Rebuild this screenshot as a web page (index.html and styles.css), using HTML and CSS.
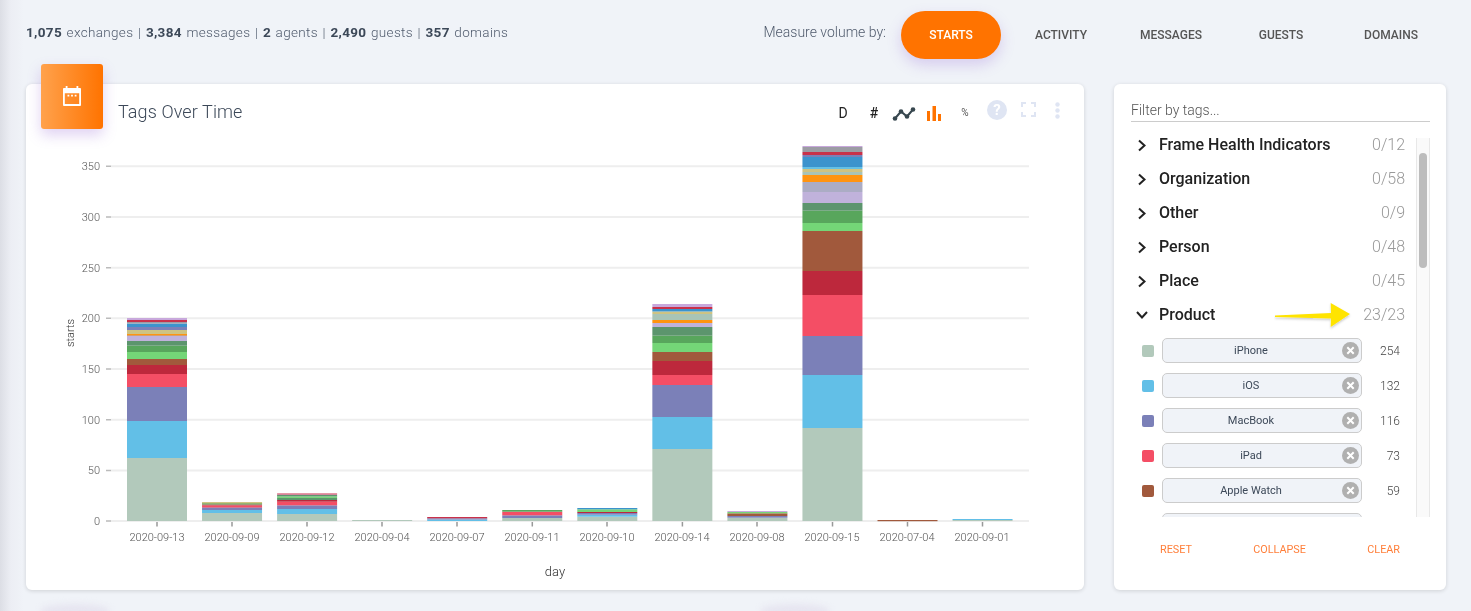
FILE: index.html
```html
<!DOCTYPE html>
<html lang="en">
<head>
<meta charset="utf-8">
<title>Tags Over Time</title>
<link rel="stylesheet" href="styles.css">
</head>
<body>
<div class="edge-shade"></div>
<div class="blob blob-a"></div>
<div class="blob blob-b"></div>
<header class="topbar">
  <p class="stats"><b>1,075</b> exchanges | <b>3,384</b> messages | <b>2</b> agents | <b>2,490</b> guests | <b>357</b> domains</p>
  <div class="measure">
    <span class="measure-label">Measure volume by:</span>
    <button class="mbtn active">STARTS</button>
    <button class="mbtn">ACTIVITY</button>
    <button class="mbtn">MESSAGES</button>
    <button class="mbtn">GUESTS</button>
    <button class="mbtn">DOMAINS</button>
  </div>
</header>
<main class="layout">
  <section class="card chart-card">
    <div class="badge">
      <svg width="20" height="22" viewBox="0 0 20 22"><path fill="#fff" fill-rule="evenodd" d="M3 0h2v2h10V0h2v2h2a1 1 0 0 1 1 1v18a1 1 0 0 1-1 1H1a1 1 0 0 1-1-1V3a1 1 0 0 1 1-1h2zM2 8v12h16V8zM5 9.500h2v2H5zM9 9.500h2v2H9zM13 9.500h2v2h-2z"/></svg>
    </div>
    <div class="chart-head">
      <h2 class="chart-title">Tags Over Time</h2>
      <div class="tools">
        <span class="tool tool-d">D</span>
        <span class="tool tool-hash">#</span>
        <span class="tool"><svg width="24" height="16" viewBox="0 0 24 16"><path class="trend" d="M3 13.500 9 6.500l6 5 6-7"/><circle class="dot" cx="3" cy="13.500" r="2.300"/><circle class="dot" cx="9" cy="6.500" r="2.300"/><circle class="dot" cx="15" cy="11.500" r="2.300"/><circle class="dot" cx="21" cy="4.500" r="2.300"/></svg></span>
        <span class="tool"><svg width="15" height="15" viewBox="0 0 15 15"><path fill="#ff7300" d="M0 5h3v10H0zM5.500 0h3.500v15H5.500zM11 8h3v7h-3z"/></svg></span>
        <span class="tool tool-pct">%</span>
        <span class="tool tool-help">?</span>
        <span class="tool tool-frame"><svg width="15" height="15" viewBox="0 0 15 15"><path class="frame" d="M1 5V1h4M10 1h4v4M14 10v4h-4M5 14H1v-4"/></svg></span>
        <span class="tool tool-kebab"><svg width="5" height="17" viewBox="0 0 5 17"><circle class="kdot" cx="2.500" cy="2.500" r="2.200"/><circle class="kdot" cx="2.500" cy="8.500" r="2.200"/><circle class="kdot" cx="2.500" cy="14.500" r="2.200"/></svg></span>
      </div>
    </div>
    <svg class="chart" width="1058" height="456" viewBox="26 134 1058 456">
      <g class="grid">
        <path d="M111 521H1029M111 470.400H1029M111 419.700H1029M111 369H1029M111 318.300H1029M111 267.700H1029M111 217H1029M111 166.300H1029"/>
      </g>
      <g class="yticks"><path d="M106 521h5M106 470.400h5M106 419.700h5M106 369h5M106 318.300h5M106 267.700h5M106 217h5M106 166.300h5"/></g>
      <g class="xticks"><path d="M157 522v4.500M232 522v4.500M307 522v4.500M382 522v4.500M457 522v4.500M532.300 522v4.500M607 522v4.500M682.400 522v4.500M757 522v4.500M832.500 522v4.500M907.500 522v4.500M982.500 522v4.500"/></g>
      <g class="ylab">
        <text x="100" y="525">0</text><text x="100" y="474.400">50</text><text x="100" y="423.700">100</text><text x="100" y="373">150</text><text x="100" y="322.300">200</text><text x="100" y="271.700">250</text><text x="100" y="221">300</text><text x="100" y="170.300">350</text>
      </g>
      <g class="xlab">
        <text x="157" y="541">2020-09-13</text><text x="232" y="541">2020-09-09</text><text x="307" y="541">2020-09-12</text><text x="382" y="541">2020-09-04</text><text x="457" y="541">2020-09-07</text><text x="532" y="541">2020-09-11</text><text x="607" y="541">2020-09-10</text><text x="682" y="541">2020-09-14</text><text x="757" y="541">2020-09-08</text><text x="832" y="541">2020-09-15</text><text x="907" y="541">2020-07-04</text><text x="982" y="541">2020-09-01</text>
      </g>
      <text class="axis-y" transform="translate(74 333) rotate(-90)">starts</text>
      <text class="axis-x" x="555" y="576">day</text>

      <g transform="translate(127 0)">
        <rect class="s1" width="60" y="458" height="63"/><rect class="s2" width="60" y="421" height="37"/><rect class="s3" width="60" y="387" height="34"/><rect class="s4" width="60" y="374" height="13"/><rect class="s5" width="60" y="365" height="9"/><rect class="s6" width="60" y="359" height="6"/><rect class="s7" width="60" y="352" height="7"/><rect class="s8" width="60" y="345.700" height="6.300"/><rect class="s9" width="60" y="341" height="4.700"/><rect class="s10" width="60" y="336" height="5"/><rect class="s11" width="60" y="335" height="1"/><rect class="s12" width="60" y="334" height="1.500"/><rect class="s14" width="60" y="330" height="4"/><rect class="s3" width="60" y="327" height="3"/><rect class="s16" width="60" y="323.500" height="3.500"/><rect class="s18" width="60" y="322" height="1.500"/><rect class="s17" width="60" y="320" height="2"/><rect class="s19" width="60" y="318" height="2"/>
      </g>
      <g transform="translate(202.050 0)">
        <rect class="s1" width="60" y="513" height="8"/><rect class="s2" width="60" y="510" height="3"/><rect class="s3" width="60" y="507.300" height="2.700"/><rect class="s4" width="60" y="505.500" height="2"/><rect class="s5" width="60" y="504.500" height="1"/><rect class="s8" width="60" y="503" height="1.500"/><rect class="s14" width="60" y="502" height="1.500"/>
      </g>
      <g transform="translate(277.100 0)">
        <rect class="s1" width="60" y="514" height="7"/><rect class="s2" width="60" y="509" height="5"/><rect class="s3" width="60" y="505.300" height="3.700"/><rect class="s4" width="60" y="501.700" height="3.600"/><rect class="s5" width="60" y="500" height="1.700"/><rect class="s9" width="60" y="498" height="2"/><rect class="s7" width="60" y="496.500" height="1.500"/><rect class="s9" width="60" y="495" height="1.500"/><rect class="s10" width="60" y="494.500" height=".5"/><rect class="s17" width="60" y="493.500" height="1"/>
      </g>
      <g transform="translate(352.150 0)">
        <rect class="s1" width="60" y="520" height="1"/>
      </g>
      <g transform="translate(427.200 0)">
        <rect class="s2" width="60" y="519.500" height="1.500"/><rect class="s3" width="60" y="518.300" height="1.200"/><rect class="s17" width="60" y="517" height="1.300"/>
      </g>
      <g transform="translate(502.250 0)">
        <rect class="s1" width="60" y="518" height="3"/><rect class="s3" width="60" y="515.300" height="2.700"/><rect class="s4" width="60" y="511.700" height="3.600"/><rect class="s8" width="60" y="510" height="1.700"/>
      </g>
      <g transform="translate(577.300 0)">
        <rect class="s1" width="60" y="516.700" height="4.300"/><rect class="s2" width="60" y="514.700" height="2"/><rect class="s3" width="60" y="513" height="1.700"/><rect class="s5" width="60" y="512" height="1"/><rect class="s7" width="60" y="509.300" height="2.700"/><rect class="s16" width="60" y="508" height="1.300"/>
      </g>
      <g transform="translate(652.350 0)">
        <rect class="s1" width="60" y="449" height="72"/><rect class="s2" width="60" y="417" height="32"/><rect class="s3" width="60" y="385" height="32"/><rect class="s4" width="60" y="375" height="10"/><rect class="s5" width="60" y="361" height="14"/><rect class="s6" width="60" y="352" height="9"/><rect class="s7" width="60" y="343" height="9"/><rect class="s8" width="60" y="335.700" height="7.300"/><rect class="s9" width="60" y="327" height="8.700"/><rect class="s10" width="60" y="323" height="4"/><rect class="s12" width="60" y="320" height="3"/><rect class="s13" width="60" y="314" height="6"/><rect class="s14" width="60" y="311.500" height="2.500"/><rect class="s16" width="60" y="309" height="2.500"/><rect class="s17" width="60" y="307" height="2"/><rect class="s19" width="60" y="304" height="3"/>
      </g>
      <g transform="translate(727.400 0)">
        <rect class="s1" width="60" y="517.700" height="3.300"/><rect class="s3" width="60" y="516" height="1.700"/><rect class="s6" width="60" y="513.300" height="2.700"/><rect class="s7" width="60" y="512" height="1.300"/><rect class="s19" width="60" y="511" height="1"/>
      </g>
      <g transform="translate(802.450 0)">
        <rect class="s1" width="60" y="428" height="93"/><rect class="s2" width="60" y="375" height="53"/><rect class="s3" width="60" y="336" height="39"/><rect class="s4" width="60" y="295" height="41"/><rect class="s5" width="60" y="271" height="24"/><rect class="s6" width="60" y="231" height="40"/><rect class="s7" width="60" y="223" height="8"/><rect class="s8" width="60" y="210.700" height="12.300"/><rect class="s9" width="60" y="203" height="7.700"/><rect class="s10" width="60" y="192" height="11"/><rect class="s11" width="60" y="182" height="10"/><rect class="s12" width="60" y="175" height="7"/><rect class="s13" width="60" y="172" height="3"/><rect class="s14" width="60" y="169" height="3"/><rect class="s15" width="60" y="167" height="2"/><rect class="s16" width="60" y="157" height="10"/><rect class="s3" width="60" y="155" height="2"/><rect class="s17" width="60" y="152" height="3"/><rect class="s18" width="60" y="147" height="5"/><rect class="s19" width="60" y="146" height="1"/>
      </g>
      <g transform="translate(877.500 0)">
        <rect class="s6" width="60" y="520" height="1.200"/>
      </g>
      <g transform="translate(952.550 0)">
        <rect class="s1" width="60" y="520" height="1"/><rect class="s2" width="60" y="519" height="1"/>
      </g>
    </svg>
  </section>

  <aside class="card filter-card">
    <div class="filter-input">Filter by tags...</div>
    <div class="list-wrap">
      <div class="list">
        <div class="group"><svg class="chev" width="10" height="13" viewBox="0 0 10 13"><path d="M2 1.500 7.500 6.500 2 11.500"/></svg><span class="group-name">Frame Health Indicators</span><span class="group-count">0/12</span></div>
        <div class="group"><svg class="chev" width="10" height="13" viewBox="0 0 10 13"><path d="M2 1.500 7.500 6.500 2 11.500"/></svg><span class="group-name">Organization</span><span class="group-count">0/58</span></div>
        <div class="group"><svg class="chev" width="10" height="13" viewBox="0 0 10 13"><path d="M2 1.500 7.500 6.500 2 11.500"/></svg><span class="group-name">Other</span><span class="group-count">0/9</span></div>
        <div class="group"><svg class="chev" width="10" height="13" viewBox="0 0 10 13"><path d="M2 1.500 7.500 6.500 2 11.500"/></svg><span class="group-name">Person</span><span class="group-count">0/48</span></div>
        <div class="group"><svg class="chev" width="10" height="13" viewBox="0 0 10 13"><path d="M2 1.500 7.500 6.500 2 11.500"/></svg><span class="group-name">Place</span><span class="group-count">0/45</span></div>
        <div class="group"><svg class="chev" width="12" height="10" viewBox="0 0 12 10"><path d="M1 2 6 7.500 11 2"/></svg><span class="group-name">Product</span><span class="group-count">23/23</span></div>
        <div class="tags">
          <div class="tag"><span class="swatch sw1"></span><span class="chip">iPhone<svg class="x" width="17" height="17" viewBox="0 0 17 17"><circle cx="8.500" cy="8.500" r="8.500"/><path d="M5.300 5.300l6.400 6.400M11.700 5.300l-6.400 6.400"/></svg></span><span class="tag-count">254</span></div>
          <div class="tag"><span class="swatch sw2"></span><span class="chip">iOS<svg class="x" width="17" height="17" viewBox="0 0 17 17"><circle cx="8.500" cy="8.500" r="8.500"/><path d="M5.300 5.300l6.400 6.400M11.700 5.300l-6.400 6.400"/></svg></span><span class="tag-count">132</span></div>
          <div class="tag"><span class="swatch sw3"></span><span class="chip">MacBook<svg class="x" width="17" height="17" viewBox="0 0 17 17"><circle cx="8.500" cy="8.500" r="8.500"/><path d="M5.300 5.300l6.400 6.400M11.700 5.300l-6.400 6.400"/></svg></span><span class="tag-count">116</span></div>
          <div class="tag"><span class="swatch sw4"></span><span class="chip">iPad<svg class="x" width="17" height="17" viewBox="0 0 17 17"><circle cx="8.500" cy="8.500" r="8.500"/><path d="M5.300 5.300l6.400 6.400M11.700 5.300l-6.400 6.400"/></svg></span><span class="tag-count">73</span></div>
          <div class="tag"><span class="swatch sw5"></span><span class="chip">Apple Watch<svg class="x" width="17" height="17" viewBox="0 0 17 17"><circle cx="8.500" cy="8.500" r="8.500"/><path d="M5.300 5.300l6.400 6.400M11.700 5.300l-6.400 6.400"/></svg></span><span class="tag-count">59</span></div>
          <div class="tag"><span class="swatch"></span><span class="chip"></span><span class="tag-count"></span></div>
        </div>
      </div>
      <div class="track"><div class="thumb"></div></div>
    </div>
    <div class="filter-foot">
      <span class="foot-btn">RESET</span>
      <span class="foot-btn">COLLAPSE</span>
      <span class="foot-btn">CLEAR</span>
    </div>
    <svg class="arrow" width="80" height="32" viewBox="0 0 80 32"><defs><filter id="as" x="-10%" y="-20%" width="120%" height="150%"><feDropShadow dx="0" dy="1.500" stdDeviation="1" flood-color="#000" flood-opacity=".22"/></filter></defs><path fill="#ffe400" filter="url(#as)" d="M1 16.500 57 14 56.700 4 76 15 56.700 28 57 19.500 1 18z"/></svg>
  </aside>
</main>
</body>
</html>
```
FILE: styles.css
```css
* { box-sizing: border-box; }
html, body { margin: 0; height: 611px; overflow: hidden; }
body {
  background: #f0f3f8;
  font-family: Roboto, "Liberation Sans", sans-serif;
  color: #3c4858;
  position: relative;
}
.edge-shade {
  position: absolute; left: 0; top: 0; bottom: 0; width: 24px;
  background: linear-gradient(90deg, #dcdee5 0%, #eceef4 45%, #f0f3f8 100%);
}
.blob {
  position: absolute; top: 604px; width: 70px; height: 14px; border-radius: 50%;
  background: #e6e5f0; filter: blur(3px);
}
.blob-a { left: 40px; }
.blob-b { left: 760px; }

.topbar {
  position: relative; will-change: transform;
  display: flex; justify-content: space-between; align-items: flex-start;
  height: 84px; padding: 11px 25px 0 26px;
}
.stats {
  margin: 12px 0 0; font-size: 13.500px; line-height: 18px; font-weight: 300;
  letter-spacing: .33px; color: #4f5a6c; word-spacing: 1px;
}
.stats b { font-weight: 700; color: #3c4858; }
.measure { display: flex; align-items: flex-start; }
.measure-label {
  margin: 12px 10px 0 0; font-size: 14px; line-height: 18px; font-weight: 300; color: #4f5a6c;
}
.mbtn {
  width: 100px; height: 48px; margin: 0 5px; padding: 0; border: 0; border-radius: 24px;
  background: transparent; color: #555; font: 500 12px/48px Roboto, sans-serif;
}
.mbtn.active {
  background: #ff7300; color: #fff;
  box-shadow: 0 6px 14px rgba(140, 90, 210, .25);
}

.layout {
  position: relative; will-change: transform;
  display: grid; grid-template-columns: 1058px 332px; gap: 30px; padding-left: 26px;
}
.card {
  position: relative; height: 506px; background: #fff; border-radius: 6px;
  box-shadow: 0 1px 4px rgba(0, 0, 0, .14);
}
.badge {
  position: absolute; left: 15px; top: -20px; width: 62px; height: 65px; border-radius: 3px;
  background: linear-gradient(90deg, #ffa24d, #ff7300);
  box-shadow: 0 6px 14px rgba(140, 90, 210, .28);
  display: flex; align-items: center; justify-content: center; padding-bottom: 2px;
}
.badge svg { width: 18px; height: 20px; }
.chart-head {
  display: flex; justify-content: space-between; align-items: center; height: 50px;
  padding: 6px 13px 0 92px;
}
.chart-title { margin: 0; font-size: 18px; line-height: 44px; font-weight: 300; letter-spacing: .1px; color: #3c4858; }
.tools {
  display: grid; grid-template-columns: 32px 30px 30px 30px 32px 32px 30px 28px;
  align-items: center; justify-items: center; margin-top: 2px;
}
.tool { display: flex; align-items: center; justify-content: center; color: #222; font-size: 14px; line-height: 20px; }
.tool-hash { font-weight: 500; }
.tool-pct { font-size: 10px; color: #555; }
.tool-help {
  width: 20px; height: 20px; border-radius: 50%; background: #dfe5f3; color: #fff;
  font-size: 15px; font-weight: 700; margin-top: -6px;
}
.tool-frame { margin-top: -8px; }
.tool-kebab { margin-top: -6px; }
.trend { fill: none; stroke: #37474f; stroke-width: 2; }
.dot { fill: #37474f; }
.frame { fill: none; stroke: #dfe5f3; stroke-width: 2; }
.kdot { fill: #dfe5f3; }

.chart { display: block; }
.grid path { fill: none; stroke: #eeeeee; stroke-width: 2; }
.yticks path { fill: none; stroke: #bbbbbb; stroke-width: 1.5; }
.xticks path { fill: none; stroke: #999999; stroke-width: 1.5; }
.ylab text { font: 300 11px Roboto, sans-serif; fill: #555; text-anchor: end; }
.xlab text { font: 300 11px Roboto, sans-serif; fill: #555; text-anchor: middle; }
.axis-y { font: 300 11px Roboto, sans-serif; fill: #333; text-anchor: middle; }
.axis-x { font: 300 13px Roboto, sans-serif; fill: #333; text-anchor: middle; }

.s1 { fill: #b2c9bb; } .s2 { fill: #62bfe7; } .s3 { fill: #7b80b8; } .s4 { fill: #f44e65; }
.s5 { fill: #bd283c; } .s6 { fill: #a1593c; } .s7 { fill: #74d677; } .s8 { fill: #58a65c; }
.s9 { fill: #5c956d; } .s10 { fill: #c0b2db; } .s11 { fill: #abacc4; } .s12 { fill: #ff9410; }
.s13 { fill: #a9c4b6; } .s14 { fill: #cec383; } .s15 { fill: #65c0e5; } .s16 { fill: #3c93cd; }
.s17 { fill: #c9314a; } .s18 { fill: #9c9ca4; } .s19 { fill: #c8a8dc; }

.filter-card { display: flex; flex-direction: column; padding: 0 16px 0 17px; }
.filter-input {
  height: 38px; padding: 18px 0 0 0; border-bottom: 1px solid #ccc; flex: none;
  font-size: 14px; line-height: 17px; font-weight: 300; color: #555;
}
.list-wrap { position: relative; display: flex; height: 390px; margin-top: 5px; overflow: hidden; flex: none; }
.list { flex: 1; min-width: 0; padding-right: 11px; }
.group { display: flex; align-items: center; height: 34px; }
.chev { flex: none; margin: 2px 0 0 6px; }
.chev path { fill: none; stroke: #222; stroke-width: 2; }
.group-name { flex: 1; margin-left: 12px; font-size: 16px; font-weight: 500; color: #222; }
.group:nth-child(6) .chev { margin-left: 5px; }
.group:nth-child(6) .group-name { margin-left: 11px; }
.group-count { font-size: 16px; font-weight: 300; color: #999; }
.tags { padding-top: 2px; }
.tag { display: flex; align-items: center; height: 35px; padding-left: 11px; }
.swatch { flex: none; width: 12px; height: 12px; border-radius: 2px; margin-right: 8px; }
.sw1 { background: #b2c9bb; } .sw2 { background: #62bfe7; } .sw3 { background: #7b80b8; }
.sw4 { background: #f44e65; } .sw5 { background: #a1593c; }
.chip {
  flex: none; position: relative; width: 200px; height: 25px; border: 1px solid #ccc; border-radius: 5px;
  background: #f0f3f8; text-align: center; font-size: 11px; line-height: 23px; font-weight: 400; color: #3c4858;
  padding-right: 22px;
}
.x { position: absolute; right: 2.500px; top: 2.500px; }
.x circle { fill: #b0b0b0; }
.x path { fill: none; stroke: #fff; stroke-width: 2; }
.tag-count { flex: 1; padding-right: 5px; text-align: right; font-size: 12px; font-weight: 300; color: #444; }
.track { flex: none; width: 14px; margin-top: 11px; background: #fafafa; border-left: 1px solid #e8e8e8; border-right: 1px solid #e8e8e8; }
.thumb { width: 8px; height: 115px; margin: 15px 0 0 2px; border-radius: 4px; background: #bdbdbd; }
.filter-foot { flex: 1; display: flex; justify-content: space-between; padding: 25px 30px 0 29px; }
.foot-btn { font-size: 10.800px; line-height: 16px; color: #ff7f3a; }
.arrow { position: absolute; left: 160px; top: 215px; }
```
